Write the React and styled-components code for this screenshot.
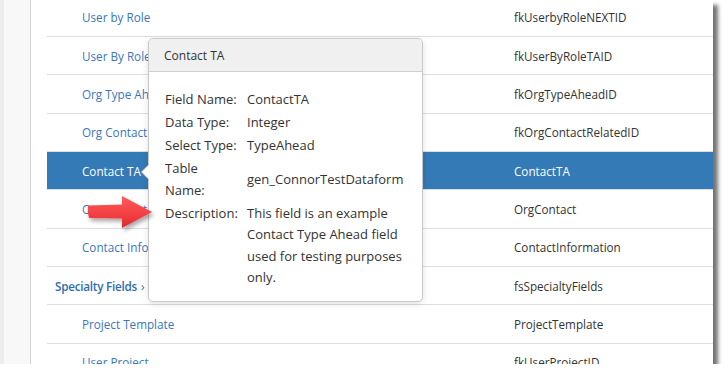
import React from "react";
import styled, { createGlobalStyle } from "styled-components";

const GlobalStyle = createGlobalStyle`
  html, body {
    margin: 0;
    padding: 0;
    background: #ffffff;
  }
  body {
    font-family: "Open Sans", "Noto Sans", "Liberation Sans", sans-serif;
    font-size: 11.7px;
    color: #333;
  }
`;

const rows = [
  { name: "User by Role", column: "fkUserbyRoleNEXTID" },
  { name: "User By Role TA", column: "fkUserByRoleTAID" },
  { name: "Org Type Ahead", column: "fkOrgTypeAheadID" },
  { name: "Org Contact Related", column: "fkOrgContactRelatedID" },
  { name: "Contact TA", column: "ContactTA", selected: true },
  { name: "Org Contact", column: "OrgContact" },
  { name: "Contact Information", column: "ContactInformation" },
  { name: "Specialty Fields", column: "fsSpecialtyFields", group: true },
  { name: "Project Template", column: "ProjectTemplate" },
  { name: "User Project", column: "fkUserProjectID" },
];

const details = [
  { label: "Field Name:", value: "ContactTA" },
  { label: "Data Type:", value: "Integer" },
  { label: "Select Type:", value: "TypeAhead" },
  { label: "Table Name:", value: "gen_ConnorTestDataform", middle: true },
  {
    label: "Description:",
    value: "This field is an example Contact Type Ahead field used for testing purposes only.",
  },
];

function App() {
  return (
    <>
      <GlobalStyle />
      <Shot>
        <Sidebar />
        <Main>
          <Rows>
            {rows.map((r) => (
              <Row key={r.name} $selected={r.selected}>
                <NameCell $group={r.group} $selected={r.selected}>
                  {r.name}
                  {r.group && <Chevron>›</Chevron>}
                </NameCell>
                <ColumnCell $selected={r.selected}>{r.column}</ColumnCell>
              </Row>
            ))}
          </Rows>
        </Main>

        <Popover>
          <PopoverHeader>Contact TA</PopoverHeader>
          <PopoverBody>
            {details.map((d) => (
              <React.Fragment key={d.label}>
                <Label>{d.label}</Label>
                <Value $middle={d.middle}>{d.value}</Value>
              </React.Fragment>
            ))}
          </PopoverBody>
        </Popover>

        <Callout width="72" height="40" viewBox="0 0 72 40">
          <defs>
            <linearGradient id="redGrad" x1="0" y1="0" x2="0" y2="1">
              <stop offset="0" stopColor="#ff5b5b" />
              <stop offset="0.6" stopColor="#f23e42" />
              <stop offset="1" stopColor="#d9282e" />
            </linearGradient>
            <filter id="soft" x="-20%" y="-30%" width="150%" height="170%">
              <feDropShadow dx="2" dy="3" stdDeviation="2" floodColor="#000" floodOpacity="0.35" />
            </filter>
          </defs>
          <path
            d="M1 11.5 L35 10.5 L35 2 L65 18 L35 34 L35 24.5 L2 24 Q0 18 1 11.5 Z"
            fill="url(#redGrad)"
            filter="url(#soft)"
          />
        </Callout>
      </Shot>
    </>
  );
}

const Shot = styled.div`
  position: relative;
  width: 713px;
  height: 364px;
  display: flex;
  background: #fff;
  box-shadow: 5px 5px 4px rgba(0, 0, 0, 0.55);
`;

const Sidebar = styled.div`
  width: 26px;
  flex: none;
  background: #f8f8f8;
  border-left: 4px solid #ededed;
  border-right: 1px solid #d2d2d2;
`;

const Main = styled.div`
  flex: 1;
  overflow: hidden;
  padding-left: 16px;
`;

const Rows = styled.div`
  margin-top: -1.33px;
`;

const Row = styled.div`
  display: flex;
  align-items: center;
  height: 38.33px;
  box-sizing: border-box;
  border-bottom: 1px solid #dddddd;
  background: ${(p) => (p.$selected ? "#337ab7" : "transparent")};
`;

const NameCell = styled.div`
  width: ${(p) => (p.$group ? 459 : 432)}px;
  padding-left: ${(p) => (p.$group ? 8 : 35)}px;
  color: ${(p) => (p.$selected ? "#ffffff" : p.$group ? "#2f6cae" : "#3a76bb")};
  font-weight: ${(p) => (p.$group ? 600 : 400)};
  letter-spacing: ${(p) => (p.$group ? "-0.25px" : "0")};
  white-space: nowrap;
`;

const Chevron = styled.span`
  margin-left: 4px;
  font-weight: 400;
`;

const ColumnCell = styled.div`
  color: ${(p) => (p.$selected ? "#ffffff" : "#333333")};
  white-space: nowrap;
`;

const Popover = styled.div`
  position: absolute;
  left: 148px;
  top: 38px;
  width: 275px;
  height: 264px;
  box-sizing: border-box;
  background: #fff;
  border: 1px solid #c8c8c8;
  border-radius: 5px;
  box-shadow: 0 2px 6px rgba(0, 0, 0, 0.12);

  &:before {
    content: "";
    position: absolute;
    left: -8px;
    top: 125px;
    border-top: 8px solid transparent;
    border-bottom: 8px solid transparent;
    border-right: 8px solid #c8c8c8;
  }
  &:after {
    content: "";
    position: absolute;
    left: -7px;
    top: 126px;
    border-top: 7px solid transparent;
    border-bottom: 7px solid transparent;
    border-right: 7px solid #fff;
  }
`;

const PopoverHeader = styled.div`
  height: 32px;
  display: flex;
  align-items: center;
  padding-left: 15px;
  background: #f0f0f0;
  border-bottom: 1px solid #cfcfcf;
  border-radius: 5px 5px 0 0;
  font-size: 12px;
  color: #333;
`;

const PopoverBody = styled.div`
  display: grid;
  grid-template-columns: 74px 162px;
  column-gap: 8px;
  row-gap: 1.5px;
  padding: 17px 16px 0 16px;
  font-size: 13px;
  line-height: 21.5px;
  color: #333;
`;

const Label = styled.div`
  align-self: start;
`;

const Value = styled.div`
  align-self: ${(p) => (p.$middle ? "center" : "start")};
`;

const Callout = styled.svg`
  position: absolute;
  left: 87px;
  top: 194px;
  overflow: visible;
`;

export default App;
